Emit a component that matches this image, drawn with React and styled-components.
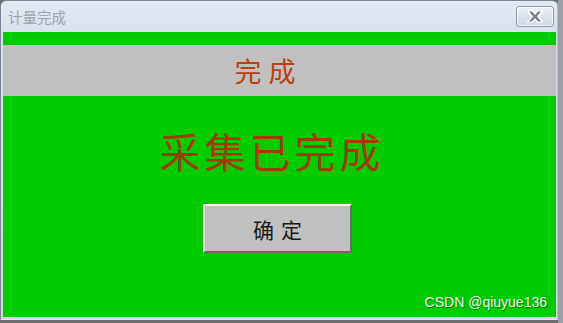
import React from "react";
import styled, { createGlobalStyle } from "styled-components";

const Global = createGlobalStyle`
  html, body { margin: 0; padding: 0; }
  body {
    width: 563px; height: 323px; overflow: hidden;
    background: #6e6e6e;
    font-family: "Noto Sans CJK SC", "Noto Sans", sans-serif;
  }
`;

const Desk = styled.div`
  width: 563px;
  height: 323px;
  display: flex;
  align-items: flex-start;
  background: linear-gradient(90deg, #6e6e6e 0 558px, #9ba0a8 558px);
`;

const Window = styled.div`
  width: 558px;
  height: 320px;
  box-sizing: border-box;
  display: flex;
  flex-direction: column;
  border-radius: 6px 6px 0 0;
  border: 1px solid #7c8594;
  border-right: 1px solid #b9c0ca;
  border-bottom: 1px solid #e8ecf2;
  background: linear-gradient(180deg, #e4eaf2 0px, #d9e0ea 32px, #d2d9e4 100%);
`;

const TitleBar = styled.div`
  height: 31px;
  display: flex;
  align-items: center;
  justify-content: space-between;
  padding: 0 3px 0 7px;
`;

const Title = styled.span`
  font-size: 14.5px;
  color: #9ea3ab;
  margin-top: -1px;
`;

const CloseButton = styled.div`
  width: 38px;
  height: 21px;
  box-sizing: border-box;
  border: 1px solid #8e98a6;
  border-radius: 3px;
  background: linear-gradient(180deg, #eef2f7 0%, #dbe2eb 50%, #cfd7e2 100%);
  box-shadow: inset 0 0 0 1px rgba(255,255,255,0.7);
  display: flex;
  align-items: center;
  justify-content: center;
  margin-top: -1px;
`;

const Client = styled.div`
  flex: 1;
  margin: 0 1px 2px 2px;
  background: #00cc00;
  display: flex;
  flex-direction: column;
  position: relative;
`;

const HeaderBand = styled.div`
  margin-top: 13px;
  height: 51px;
  background: #c0c0c0;
  display: flex;
  align-items: center;
  justify-content: center;
`;

const HeaderText = styled.span`
  font-size: 27px;
  color: #b5420f;
  letter-spacing: 7px;
  margin-right: 22px;
  margin-top: -1px;
`;

const Body = styled.div`
  display: flex;
  flex-direction: column;
  align-items: center;
`;

const Message = styled.div`
  margin-top: 29px;
  font-size: 41px;
  line-height: 50px;
  color: #a33a06;
  letter-spacing: 4px;
  margin-right: 15px;
`;

const OkButton = styled.div`
  margin-top: 29px;
  margin-right: 4px;
  width: 149px;
  height: 49px;
  box-sizing: border-box;
  background: #c0c0c0;
  border-top: 2px solid #f4f4f4;
  border-left: 2px solid #f4f4f4;
  border-right: 2px solid #6a6a6a;
  border-bottom: 2px solid #6a6a6a;
  display: flex;
  align-items: center;
  justify-content: center;
  font-size: 21px;
  color: #1a1a1a;
  letter-spacing: 7px;
  padding-left: 7px;
`;

const Watermark = styled.span`
  position: absolute;
  right: 9px;
  bottom: 7px;
  font-family: "Liberation Sans", Arial, sans-serif;
  font-size: 14px;
  color: #f0f0f0;
  text-shadow: 1px 1px 1px rgba(0,0,0,0.35);
`;

export default function App() {
  return (
    <>
      <Global />
      <Desk>
        <Window>
          <TitleBar>
            <Title>计量完成</Title>
            <CloseButton>
              <svg width="18" height="13" viewBox="0 0 18 13">
                <path
                  d="M1.5 1h5l2.5 3 2.5-3h5l-4.8 5.5 4.8 5.5h-5L9 9l-2.5 3h-5l4.8-5.5z"
                  fill="#7a7f86"
                  stroke="#ffffff"
                  strokeWidth="1.2"
                  strokeLinejoin="round"
                />
              </svg>
            </CloseButton>
          </TitleBar>
          <Client>
            <HeaderBand>
              <HeaderText>完成</HeaderText>
            </HeaderBand>
            <Body>
              <Message>采集已完成</Message>
              <OkButton>确定</OkButton>
            </Body>
            <Watermark>CSDN @qiuyue136</Watermark>
          </Client>
        </Window>
      </Desk>
    </>
  );
}
